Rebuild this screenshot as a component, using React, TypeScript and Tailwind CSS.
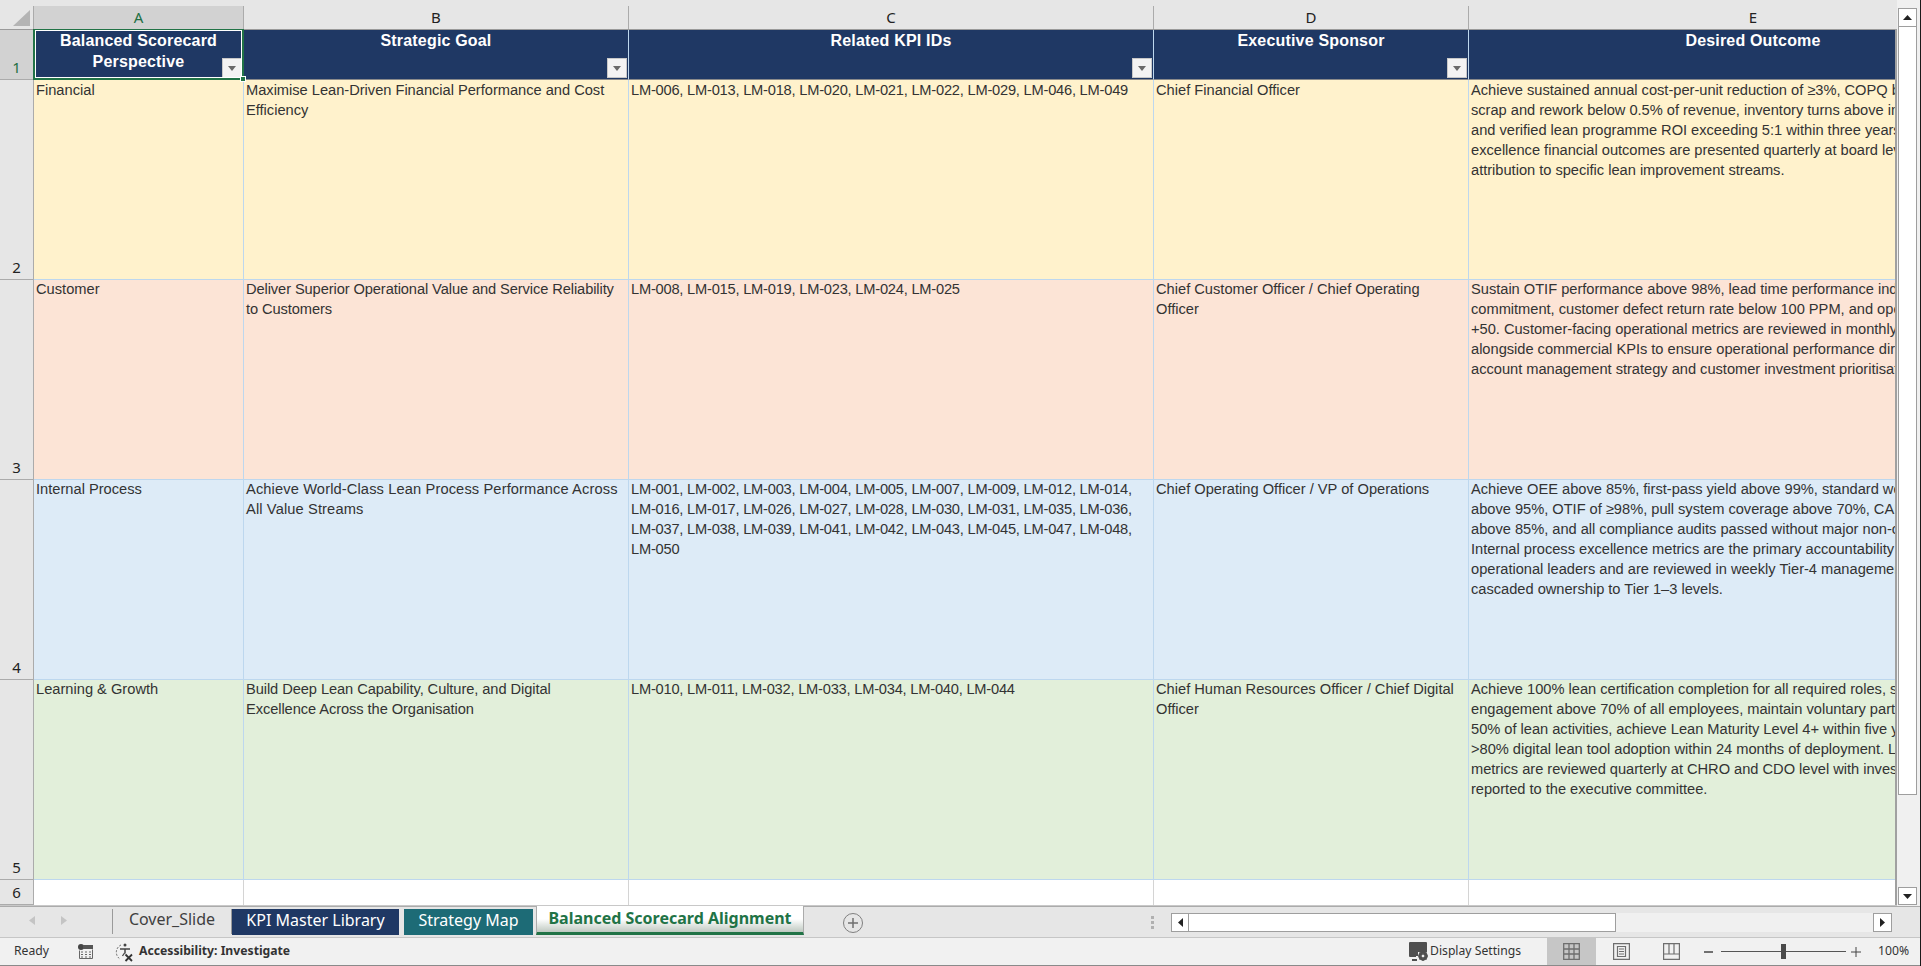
import React from "react";

const FONT = "[font-family:'Liberation_Sans',Arial,sans-serif]";
const UI = "[font-family:'Noto_Sans','Open_Sans',sans-serif]";

const rows = [
  {
    n: "2",
    bg: "bg-[#FFF2CC]",
    shift: "",
    bt: "tracking-[-0.02px]",
    a: "Financial",
    b: "Maximise Lean-Driven Financial Performance and Cost Efficiency",
    c: "LM-006, LM-013, LM-018, LM-020, LM-021, LM-022, LM-029, LM-046, LM-049",
    d: "Chief Financial Officer",
    e: [
      "Achieve sustained annual cost-per-unit reduction of ≥3%, COPQ below 2%,",
      "scrap and rework below 0.5% of revenue, inventory turns above industry",
      "and verified lean programme ROI exceeding 5:1 within three years. Lean",
      "excellence financial outcomes are presented quarterly at board level with",
      "attribution to specific lean improvement streams.",
    ],
  },
  {
    n: "3",
    bg: "bg-[#FCE4D6]",
    shift: "-mt-px",
    bt: "tracking-[-0.1px]",
    a: "Customer",
    b: "Deliver Superior Operational Value and Service Reliability to Customers",
    c: "LM-008, LM-015, LM-019, LM-023, LM-024, LM-025",
    d: "Chief Customer Officer / Chief Operating Officer",
    e: [
      "Sustain OTIF performance above 98%, lead time performance indexed to",
      "commitment, customer defect return rate below 100 PPM, and operational",
      "+50. Customer-facing operational metrics are reviewed in monthly reviews",
      "alongside commercial KPIs to ensure operational performance directly",
      "account management strategy and customer investment prioritisation.",
    ],
  },
  {
    n: "4",
    bg: "bg-[#DDEBF7]",
    shift: "-mt-px",
    bt: "tracking-[0.12px]",
    a: "Internal Process",
    b: "Achieve World-Class Lean Process Performance Across All Value Streams",
    c: "LM-001, LM-002, LM-003, LM-004, LM-005, LM-007, LM-009, LM-012, LM-014, LM-016, LM-017, LM-026, LM-027, LM-028, LM-030, LM-031, LM-035, LM-036, LM-037, LM-038, LM-039, LM-041, LM-042, LM-043, LM-045, LM-047, LM-048, LM-050",
    d: "Chief Operating Officer / VP of Operations",
    e: [
      "Achieve OEE above 85%, first-pass yield above 99%, standard work",
      "above 95%, OTIF of ≥98%, pull system coverage above 70%, CAPA closure",
      "above 85%, and all compliance audits passed without major non-conformity.",
      "Internal process excellence metrics are the primary accountability of",
      "operational leaders and are reviewed in weekly Tier-4 management with",
      "cascaded ownership to Tier 1–3 levels.",
    ],
  },
  {
    n: "5",
    bg: "bg-[#E2EFDA]",
    shift: "-mt-px",
    bt: "tracking-[-0.08px]",
    a: "Learning & Growth",
    b: "Build Deep Lean Capability, Culture, and Digital\nExcellence Across the Organisation",
    c: "LM-010, LM-011, LM-032, LM-033, LM-034, LM-040, LM-044",
    d: "Chief Human Resources Officer / Chief Digital Officer",
    e: [
      "Achieve 100% lean certification completion for all required roles, sustain",
      "engagement above 70% of all employees, maintain voluntary participation",
      "50% of lean activities, achieve Lean Maturity Level 4+ within five years,",
      ">80% digital lean tool adoption within 24 months of deployment. Learning",
      "metrics are reviewed quarterly at CHRO and CDO level with investment",
      "reported to the executive committee.",
    ],
  },
];

const heads = [
  { l: "A", t: "Balanced Scorecard Perspective", w: "w-[210px]" },
  { l: "B", t: "Strategic Goal", w: "w-[385px]" },
  { l: "C", t: "Related KPI IDs", w: "w-[525px]" },
  { l: "D", t: "Executive Sponsor", w: "w-[315px]" },
];

function FilterBtn() {
  return (
    <div className="absolute right-[1px] bottom-[1px] w-[20px] h-[20px] bg-[#F3F3F3] border border-[#C8C8C8] flex items-center justify-center">
      <svg width="8" height="5" viewBox="0 0 8 5"><path d="M0 0h8L4 5z" fill="#6A6A6A" /></svg>
    </div>
  );
}

function RowHead({ n, h, active }: { n: string; h: string; active?: boolean }) {
  return (
    <div className={`${h} w-[34px] shrink-0 border-r border-b border-[#ABABAB] flex items-end justify-center pb-[2px] text-[15px] leading-[20px] ${UI} ${active ? "bg-[#D2D2D2] text-[#1E6F44]" : "bg-[#E6E6E6] text-[#222]"}`}>
      {n}
    </div>
  );
}

function ColHead({ l, w, active }: { l: string; w: string; active?: boolean }) {
  return (
    <div className={`${w} shrink-0 h-full flex items-center justify-center border-r border-[#ABABAB] text-[15px] ${UI} ${active ? "bg-[#D2D2D2] text-[#1E6F44]" : "bg-[#E6E6E6] text-[#222]"}`}>
      {l}
    </div>
  );
}

function Cell({ w, bg, children, cls }: { w: string; bg: string; children: React.ReactNode; cls?: string }) {
  return (
    <div className={`${w} shrink-0 h-full ${bg} border-r border-b border-[#BDD7EE] pl-[2px] pr-[3px] ${cls ?? ""}`}>
      {children}
    </div>
  );
}

function TabButton({ children, cls }: { children: React.ReactNode; cls: string }) {
  return <div className={`flex items-center justify-center pb-[5px] text-[16px] ${UI} ${cls}`}>{children}</div>;
}

export default function App() {
  return (
    <div className={`w-[1921px] h-[966px] overflow-hidden flex flex-col bg-[#E6E6E6] border-r border-r-[#1A1A1A] ${FONT}`}>
      {/* sheet + vertical scrollbar */}
      <div className="h-[906px] flex shrink-0">
        <div className="w-[1897px] shrink-0 overflow-hidden border-b border-[#C8C8C8] flex flex-col">
          <div className="h-[6px] shrink-0 bg-[#E6E6E6]" />
          {/* column letters */}
          <div className="h-[23px] shrink-0 flex">
            <div className="w-[34px] shrink-0 h-full bg-[#E6E6E6] flex items-end justify-end pr-[3px] pb-[3px] border-r border-[#ABABAB]">
              <svg width="17" height="16" viewBox="0 0 17 16"><path d="M17 0v16H0z" fill="#B4B4B4" /></svg>
            </div>
            {heads.map((h, i) => (
              <ColHead key={h.l} l={h.l} w={h.w} active={i === 0} />
            ))}
            <div className="w-[568px] shrink-0 h-full flex items-center justify-center bg-[#E6E6E6] text-[15px] text-[#222]">
              <span className={UI}>E</span>
            </div>
          </div>
          {/* grid body, clipped at the sheet's right edge */}
          <div className="flex-1 min-h-0 flex flex-col border-r-2 border-r-[#A0A0A0] overflow-hidden">
            <div className="h-[51px] shrink-0 flex border-t border-[#9A9A9A]">
              <RowHead n="1" h="h-[50px]" active />
              {heads.map((h, i) => (
                <div key={h.l} className={`${h.w} shrink-0 h-full relative bg-[#1F3864] border-r border-[#BDD7EE] border-b border-b-[#8A8A8A] text-white font-bold text-[16px] tracking-[0.18px] leading-[21px] text-center px-[18px]`}>
                  {h.t}
                  <FilterBtn />
                  {i === 0 && (
                    <div className="absolute left-[-1px] right-[-1px] top-[-2px] bottom-[-1px] border-2 border-[#217346] pointer-events-none z-10">
                      <div className="w-full h-full border border-white" />
                    </div>
                  )}
                  {i === 0 && (
                    <div className="absolute right-[-3px] bottom-[-3px] w-[6px] h-[6px] bg-[#217346] border border-white z-20" />
                  )}
                </div>
              ))}
              <div className="w-[568px] shrink-0 h-full bg-[#1F3864] border-b border-[#8A8A8A] text-white font-bold text-[16px] tracking-[0.18px] leading-[21px] text-center">
                Desired Outcome
              </div>
            </div>
            {rows.map((r) => (
              <div key={r.n} className="h-[200px] shrink-0 flex">
                <RowHead n={r.n} h="h-full" />
                <div className="flex flex-1 text-[14.67px] leading-[20px] text-[#333]">
                  <Cell w="w-[210px]" bg={r.bg}><div className={r.shift}>{r.a}</div></Cell>
                  <Cell w="w-[385px]" bg={r.bg}><div className={`whitespace-pre-line ${r.shift} ${r.bt}`}>{r.b}</div></Cell>
                  <Cell w="w-[525px]" bg={r.bg} cls="tracking-[-0.22px]"><div className={r.shift}>{r.c}</div></Cell>
                  <Cell w="w-[315px]" bg={r.bg}><div className={r.shift}>{r.d}</div></Cell>
                  <div className={`w-[568px] shrink-0 h-full ${r.bg} border-b border-[#BDD7EE] pl-[2px] tracking-[-0.02px]`}>
                    <div className={r.shift}>
                      {r.e.map((l) => (
                        <div key={l} className="whitespace-nowrap">{l}</div>
                      ))}
                    </div>
                  </div>
                </div>
              </div>
            ))}
            <div className="flex-1 flex min-h-0 bg-white">
              <RowHead n="6" h="h-full" />
              {heads.map((h) => (
                <div key={h.l} className={`${h.w} shrink-0 border-r border-[#D4D4D4]`} />
              ))}
            </div>
          </div>
        </div>
        {/* vertical scrollbar */}
        <div className="flex-1 flex flex-col bg-[#F0F0F0] pt-[8px] pb-[1px] pl-[1px] pr-[3px]">
          <div className="h-[19px] bg-white border border-[#9E9E9E] flex items-center justify-center shrink-0">
            <svg width="9" height="5" viewBox="0 0 9 5"><path d="M4.500 0L9 5H0z" fill="#222" /></svg>
          </div>
          <div className="h-[768px] shrink-0 bg-white border-x border-b border-[#9E9E9E]" />
          <div className="flex-1" />
          <div className="h-[18px] bg-white border border-[#9E9E9E] flex items-center justify-center shrink-0">
            <svg width="9" height="5" viewBox="0 0 9 5"><path d="M0 0h9L4.500 5z" fill="#222" /></svg>
          </div>
        </div>
      </div>

      {/* tab bar */}
      <div className="h-[32px] shrink-0 flex bg-[#E6E6E6] border-t border-[#ABABAB] border-b border-b-[#C6C6C6]">
        <div className="w-[112px] shrink-0 flex items-center pb-[3px]">
          <svg className="ml-[29px]" width="6" height="9" viewBox="0 0 6 9"><path d="M6 0v9L0 4.500z" fill="#C4C4C4" /></svg>
          <svg className="ml-[26px]" width="6" height="9" viewBox="0 0 6 9"><path d="M0 0v9l6-4.500z" fill="#C4C4C4" /></svg>
        </div>
        <div className="flex items-end h-[28px] w-[692px] shrink-0">
          <div className="w-[120px] h-[25px] mb-[1px] flex border-l border-[#9A9A9A] border-r">
            <TabButton cls="w-full text-[#3F3F3F]">Cover_Slide</TabButton>
          </div>
          <TabButton cls="w-[167px] h-[26px] bg-[#1F3864] text-white">KPI Master Library</TabButton>
          <TabButton cls="w-[129px] h-[26px] bg-[#1D6B76] text-white ml-[5px]">Strategy Map</TabButton>
          <div className={`w-[268px] h-[29px] ml-[3px] pb-[2px] flex items-center justify-center border-x border-[#ABABAB] border-b-[3px] border-b-[#217346] bg-gradient-to-b from-white via-white to-[#BFC9C1] text-[#217346] font-bold text-[16px] ${UI}`}>
            Balanced Scorecard Alignment
          </div>
        </div>
        <div className="ml-[39px] w-[20px] h-[20px] mt-[6px] rounded-full border-[1.5px] border-[#808080] flex items-center justify-center shrink-0">
          <svg width="10" height="10" viewBox="0 0 10 10"><path d="M5 0v10M0 5h10" stroke="#707070" strokeWidth="1.500" /></svg>
        </div>
        <div className="ml-[288px] w-[4px] flex flex-col gap-[2px] mt-[9px] shrink-0">
          <div className="w-[3px] h-[3px] bg-[#B0B0B0]" />
          <div className="w-[3px] h-[3px] bg-[#B0B0B0]" />
          <div className="w-[3px] h-[3px] bg-[#B0B0B0]" />
        </div>
        <div className="ml-[16px] mt-[6px] h-[19px] w-[721px] flex shrink-0">
          <div className="w-[18px] bg-white border border-[#9E9E9E] flex items-center justify-center">
            <svg width="5" height="9" viewBox="0 0 5 9"><path d="M5 0v9L0 4.500z" fill="#222" /></svg>
          </div>
          <div className="w-[427px] bg-white border-y border-r border-[#9E9E9E]" />
          <div className="flex-1 bg-[#F0F0F0]" />
          <div className="w-[19px] bg-white border border-[#9E9E9E] flex items-center justify-center">
            <svg width="5" height="9" viewBox="0 0 5 9"><path d="M0 0v9l5-4.500z" fill="#222" /></svg>
          </div>
        </div>
      </div>

      {/* status bar */}
      <div className={`h-[28px] shrink-0 flex items-center bg-[#F1F1F1] border-b border-[#8A8A8A] text-[12.2px] text-[#333] ${UI}`}>
        <span className="ml-[14px] w-[64px]">Ready</span>
        <svg className="shrink-0" width="15" height="15" viewBox="0 0 15 15">
          <circle cx="3" cy="3" r="3" fill="#444" />
          <path d="M5 1h10v4H5z" fill="#555" />
          <path d="M1.500 6.500v8h13v-9" fill="none" stroke="#666" />
          <path d="M3 8h2M7 8h2M11 8h2M3 10.500h2M7 10.500h2M11 10.500h2M3 13h2M7 13h2M11 13h2" stroke="#666" />
        </svg>
        <svg className="ml-[22px] shrink-0" width="20" height="20" viewBox="0 0 20 20" fill="none">
          <path d="M6 3A8 8 0 0 0 5 17" stroke="#666" strokeDasharray="2 1.500" />
          <circle cx="10" cy="3" r="1.500" fill="#444" />
          <path d="M5 7h10M10 6.500v5" stroke="#444" strokeWidth="1.500" />
          <path d="M9.500 11l-2 3" stroke="#444" strokeWidth="1.300" />
          <path d="M10.500 12.500l6.500 6.500M17 12.500l-6.500 6.500" stroke="#333" strokeWidth="1.800" />
        </svg>
        <span className="ml-[4px] font-bold w-[1270px]">Accessibility: Investigate</span>
        <svg className="shrink-0" width="19" height="19" viewBox="0 0 19 19">
          <path d="M1 0h16a1 1 0 0 1 1 1v9H9v4H7v1H1a1 1 0 0 1-1-1V1a1 1 0 0 1 1-1z" fill="#4F4F4F" />
          <circle cx="14" cy="14" r="3.500" fill="none" stroke="#4F4F4F" strokeWidth="2.500" />
          <path d="M14 9v10M9 14h10M10.500 10.500l7 7M17.500 10.500l-7 7" stroke="#4F4F4F" strokeWidth="1.200" />
          <circle cx="14" cy="14" r="1.200" fill="#F1F1F1" />
          <path d="M3 18h5" stroke="#4F4F4F" strokeWidth="2" />
        </svg>
        <span className="ml-[2px] w-[117px] text-[#333]">Display Settings</span>
        <div className="w-[49px] h-full bg-[#C6C6C6] flex items-center justify-center shrink-0">
          <svg width="17" height="17" viewBox="0 0 17 17" fill="none" stroke="#6E6E6E" strokeWidth="1.300">
            <path d="M.7.700h15.600v15.600H.7zM6 .7v15.600M11 .7v15.600M.7 6h15.600M.7 11h15.600" />
          </svg>
        </div>
        <div className="w-[50px] h-full flex items-center justify-center shrink-0">
          <svg width="17" height="17" viewBox="0 0 17 17" fill="none" stroke="#6E6E6E" strokeWidth="1.200">
            <path d="M.6.600h15.800v15.800H.6zM4.500 3.500h8v10h-8z" />
            <path d="M6 6h5M6 8.500h5M6 11h5" strokeWidth="1" />
          </svg>
        </div>
        <div className="w-[50px] h-full flex items-center justify-center shrink-0">
          <svg width="17" height="17" viewBox="0 0 17 17" fill="none" stroke="#6E6E6E" strokeWidth="1.200">
            <path d="M.6.600h15.800v15.800H.6zM.6 11h15.800M6 .6V11M11 .6V11" />
          </svg>
        </div>
        <svg className="ml-[8px] shrink-0" width="9" height="2" viewBox="0 0 9 2"><path d="M0 1h9" stroke="#444" strokeWidth="1.500" /></svg>
        <div className="ml-[8px] w-[125px] h-[15px] relative flex items-center shrink-0">
          <div className="w-full h-px bg-[#555]" />
          <div className="absolute left-[60px] top-0 w-[5px] h-[15px] bg-[#4A4A4A]" />
        </div>
        <svg className="ml-[5px] shrink-0" width="10" height="10" viewBox="0 0 10 10"><path d="M0 5h10M5 0v10" stroke="#444" /></svg>
        <span className="ml-[17px]">100%</span>
      </div>
    </div>
  );
}
